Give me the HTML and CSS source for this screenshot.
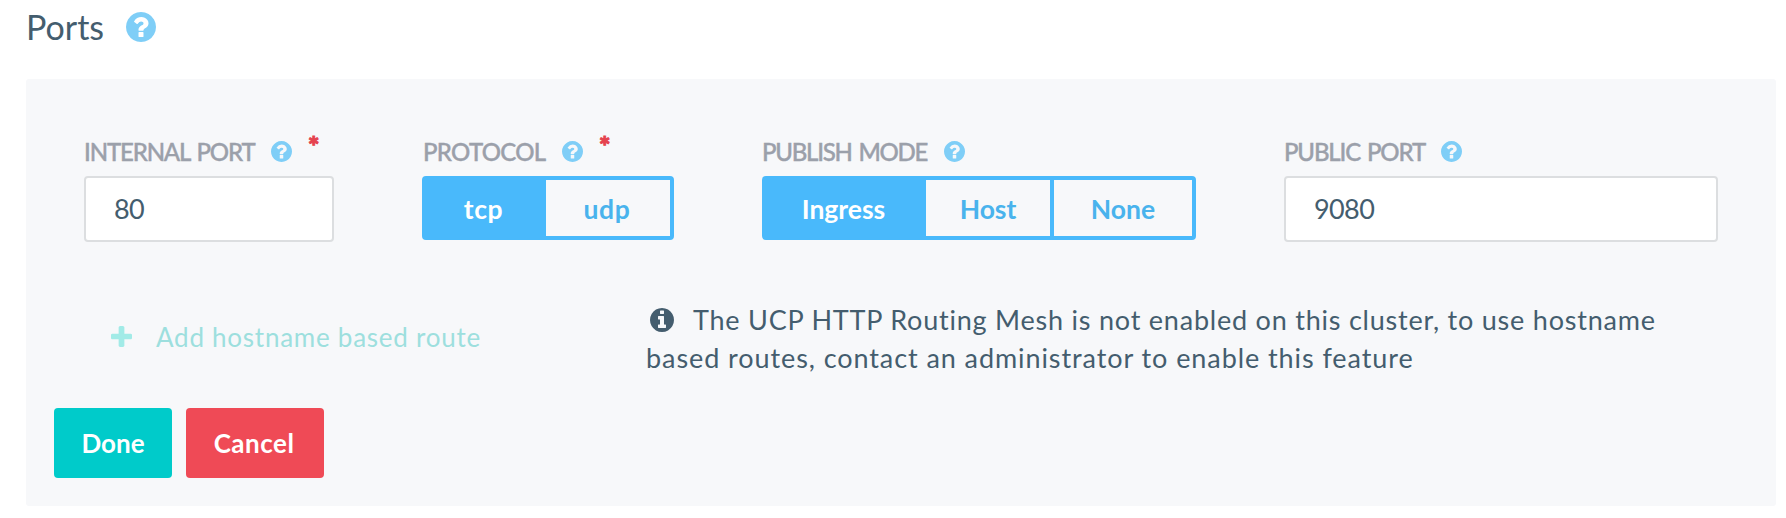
FILE: index.html
```html
<!DOCTYPE html>
<html lang="en">

<head>
  <meta charset="UTF-8">
  <meta name="viewport" content="width=device-width, initial-scale=1.0">
  <title>Ports</title>
  <link rel="stylesheet" href="styles.css">
</head>

<body>
  <svg class="sprite" width="0" height="0">
    <symbol id="question" viewBox="128 128 1536 1536">
      <path d="M1024 1376v-192q0-14-9-23t-23-9h-192q-14 0-23 9t-9 23v192q0 14 9 23t23 9h192q14 0 23-9t9-23zm256-672q0-88-55.500-163t-138.500-116-170-41q-243 0-371 213-15 24 8 42l132 100q7 6 19 6 16 0 25-12 53-68 86-92 34-24 86-24 48 0 85.500 26t37.500 59q0 38-20 61t-68 45q-63 28-115.500 86.500t-52.500 125.500v36q0 14 9 23t23 9h192q14 0 23-9t9-23q0-19 21.500-49.500t54.500-49.500q32-18 49-28.500t46-35 44.500-48 28-60.500 12.500-81zm384 192q0 209-103 385.500t-279.500 279.500-385.500 103-385.500-103-279.500-279.500-103-385.500 103-385.500 279.500-279.500 385.500-103 385.500 103 279.500 279.500 103 385.500z"/>
    </symbol>
    <symbol id="info" viewBox="128 128 1536 1536">
      <path d="M1152 1376v-160q0-14-9-23t-23-9h-96v-512q0-14-9-23t-23-9h-320q-14 0-23 9t-9 23v160q0 14 9 23t23 9h96v320h-96q-14 0-23 9t-9 23v160q0 14 9 23t23 9h448q14 0 23-9t9-23zm-128-896v-160q0-14-9-23t-23-9h-192q-14 0-23 9t-9 23v160q0 14 9 23t23 9h192q14 0 23-9t9-23zm640 416q0 209-103 385.500t-279.500 279.500-385.500 103-385.500-103-279.500-279.500-103-385.500 103-385.500 279.500-279.500 385.500-103 385.500 103 279.500 279.500 103 385.500z"/>
    </symbol>
    <symbol id="plus" viewBox="192 192 1408 1408">
      <path d="M1600 800v192q0 40-28 68t-68 28h-416v416q0 40-28 68t-68 28h-192q-40 0-68-28t-28-68v-416h-416q-40 0-68-28t-28-68v-192q0-40 28-68t68-28h416v-416q0-40 28-68t68-28h192q40 0 68 28t28 68v416h416q40 0 68 28t28 68z"/>
    </symbol>
  </svg>

  <h2 class="title"><span class="title-text">Ports</span> <svg class="help"><use href="#question"/></svg></h2>

  <div class="panel">
    <div class="fields">
      <div class="field">
        <label class="label" for="internal"><span class="label-internal">INTERNAL PORT</span><svg class="help"><use href="#question"/></svg><span class="required">*</span></label>
        <input class="input" type="text" id="internal" value="80">
      </div>
      <div class="field">
        <div class="label"><span class="label-protocol">PROTOCOL</span><svg class="help"><use href="#question"/></svg><span class="required">*</span></div>
        <div class="toggle toggle-protocol">
          <button class="active">tcp</button>
          <button>udp</button>
        </div>
      </div>
      <div class="field">
        <div class="label"><span class="label-mode">PUBLISH MODE</span><svg class="help"><use href="#question"/></svg></div>
        <div class="toggle toggle-mode">
          <button class="active">Ingress</button>
          <button>Host</button>
          <button>None</button>
        </div>
      </div>
      <div class="field">
        <label class="label" for="public"><span class="label-public">PUBLIC PORT</span><svg class="help"><use href="#question"/></svg></label>
        <input class="input" type="text" id="public" value="9080">
      </div>
    </div>

    <div class="routes">
      <a class="add-route"><svg class="plus"><use href="#plus"/></svg><span>Add hostname based route</span></a>
      <p class="message"><svg class="info"><use href="#info"/></svg><span class="first-line">The UCP HTTP Routing Mesh is not enabled on this cluster, to use hostname</span><br><span class="second-line">based routes, contact an administrator to enable this feature</span></p>
    </div>

    <div class="actions">
      <button class="btn btn-done">Done</button>
      <button class="btn btn-cancel">Cancel</button>
    </div>
  </div>
</body>

</html>
```
FILE: styles.css
```css
* {
  box-sizing: border-box;
}

body {
  margin: 0;
  padding: 0 10px 12px 26px;
  background-color: #fff;
  color: #445d6e;
  font-family: Lato, sans-serif;
  font-size: 27px;
}

svg {
  display: block;
  flex: none;
  fill: currentColor;
}

.sprite {
  position: absolute;
}

button,
input {
  font-family: inherit;
  color: inherit;
  margin: 0;
}

.title {
  display: flex;
  align-items: center;
  height: 79px;
  margin: 0;
  padding-bottom: 25px;
  font-size: 34px;
  font-weight: 400;
}

.title-text {
  width: 100px;
  padding-bottom: 1px;
}

.help {
  width: 21px;
  height: 21px;
  color: #7fcef7;
}

.title .help {
  width: 30px;
  height: 30px;
}

.panel {
  height: 427px;
  padding: 57px 58px 0;
  background-color: #f7f8fa;
  border-radius: 3px;
}

.fields {
  display: grid;
  grid-template-columns: 250px 252px 434px 434px;
  column-gap: 88px;
}

.label {
  display: flex;
  align-items: center;
  height: 30px;
  margin-bottom: 10px;
  gap: 16px;
  color: #9ba0aa;
  font-size: 24px;
  font-weight: 500;
  white-space: nowrap;
  word-spacing: 2px;
  -webkit-text-stroke: 0.4px #9ba0aa;
}

.label-internal {
  width: 171px;
  letter-spacing: -1.15px;
}

.label-protocol {
  width: 124px;
  padding-left: 1px;
  letter-spacing: -0.7px;
}

.label-mode {
  width: 166px;
  letter-spacing: -1.25px;
}

.label-public {
  width: 141px;
  letter-spacing: -1.15px;
}

.required {
  height: 40px;
  line-height: 40px;
  padding-bottom: 10px;
  margin-top: -10px;
  color: #e5434f;
  font-size: 27px;
  font-weight: 900;
  -webkit-text-stroke: 1px #e5434f;
}

.input {
  display: block;
  width: 100%;
  height: 66px;
  padding: 0 28px 2px;
  border: 2px solid #dcdee0;
  border-radius: 4px;
  background-color: #fff;
  font-size: 27px;
  letter-spacing: -0.6px;
}

.toggle {
  display: grid;
  height: 64px;
  border: 4px solid #49b9fb;
  border-radius: 4px;
  background-color: #49b9fb;
}

.toggle-protocol {
  grid-template-columns: 120px 124px;
}

.toggle-mode {
  grid-template-columns: 160px 124px 138px;
  column-gap: 0;
}

.toggle-mode button:last-child {
  margin-left: 4px;
  width: 138px;
}

.toggle button {
  padding: 2px 0 0;
  border: 0;
  background-color: #f7f8fa;
  color: #49b3ed;
  font-size: 26.5px;
  font-weight: 700;
}

.toggle-protocol button {
  padding-right: 2px;
  letter-spacing: 0.6px;
}

.toggle .active {
  padding-right: 5px;
  background-color: #49b9fb;
  color: #fff;
}

.routes {
  display: flex;
  height: 90px;
  margin-top: 59px;
}

.add-route {
  display: flex;
  align-items: flex-start;
  width: 562px;
  padding: 25px 0 0 27px;
  gap: 24px;
  color: #9ddfde;
  font-size: 26px;
  letter-spacing: 0.75px;
}

.add-route span {
  line-height: 22px;
}

.plus {
  width: 21px;
  height: 21px;
  color: #a2ebe7;
}

.message {
  margin: 0;
  line-height: 38px;
  white-space: nowrap;
}

.first-line {
  letter-spacing: 0.78px;
}

.second-line {
  letter-spacing: 0.92px;
}

.info {
  display: inline-block;
  width: 24px;
  height: 24px;
  margin: 0 19px 0 4px;
  vertical-align: -2px;
}

.actions {
  display: flex;
  gap: 14px;
  margin: 17px 0 0 -30px;
}

.btn {
  height: 70px;
  padding: 0;
  border: 0;
  border-radius: 4px;
  color: #fff;
  font-size: 26px;
  font-weight: 700;
}

.btn-done {
  width: 118px;
  background-color: #00cbca;
}

.btn-cancel {
  width: 138px;
  padding-right: 2px;
  background-color: #ef4a56;
  letter-spacing: 0.5px;
}
```
